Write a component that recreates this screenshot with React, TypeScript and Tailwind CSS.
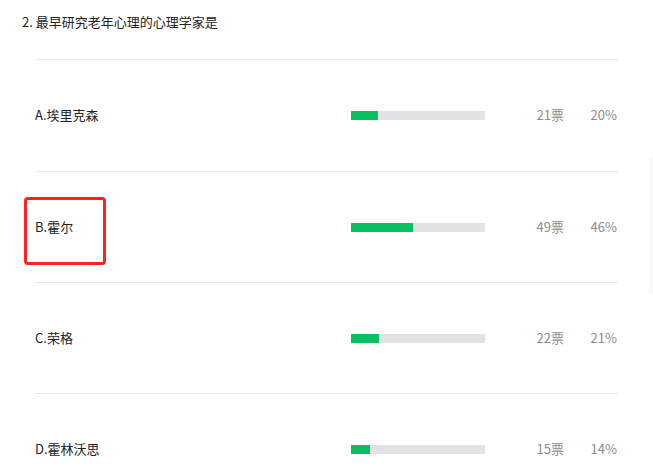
import React from "react";

const rows = [
  { label: "A.埃里克森", votes: "21票", pct: 20 },
  { label: "B.霍尔", votes: "49票", pct: 46, marked: true },
  { label: "C.荣格", votes: "22票", pct: 21 },
  { label: "D.霍林沃思", votes: "15票", pct: 14 },
];

export default function App() {
  return (
    <div
      className="relative w-[653px] h-[472px] overflow-hidden bg-white text-[13px] text-[#333]"
      style={{ fontFamily: '"Noto Sans CJK SC", "Noto Sans", sans-serif' }}
    >
      <div className="pl-[22px] pt-[12px] leading-[20px] text-[#222]">2. 最早研究老年心理的心理学家是</div>
      <div className="ml-[35px] mt-[27px] w-[583px]">
        {rows.map((r, i) => (
          <div
            key={r.label}
            className={`relative flex items-center border-t border-[#e8e8e8] ${i === 0 ? "h-[112px] pb-[1px]" : "h-[111px]"}`}
          >
            {r.marked && (
              <div className="absolute left-[-11px] top-[25px] h-[68px] w-[82px] rounded-[4px] border-[3px] border-[#ff2020]" />
            )}
            <div className="w-[316px] text-[#222]">{r.label}</div>
            <div className="h-[9px] w-[134px] bg-[#e2e2e4]">
              <div className="h-full bg-[#07c160]" style={{ width: `${r.pct}%` }} />
            </div>
            <div className="w-[79px] text-right text-[#8c8c8c]">{r.votes}</div>
            <div className="w-[53px] text-right text-[#8c8c8c]">{r.pct}%</div>
          </div>
        ))}
      </div>
      <div className="absolute right-0 top-[157px] h-[136px] w-[4px] rounded-l-[3px] bg-[#f8f8f8]" />
    </div>
  );
}
